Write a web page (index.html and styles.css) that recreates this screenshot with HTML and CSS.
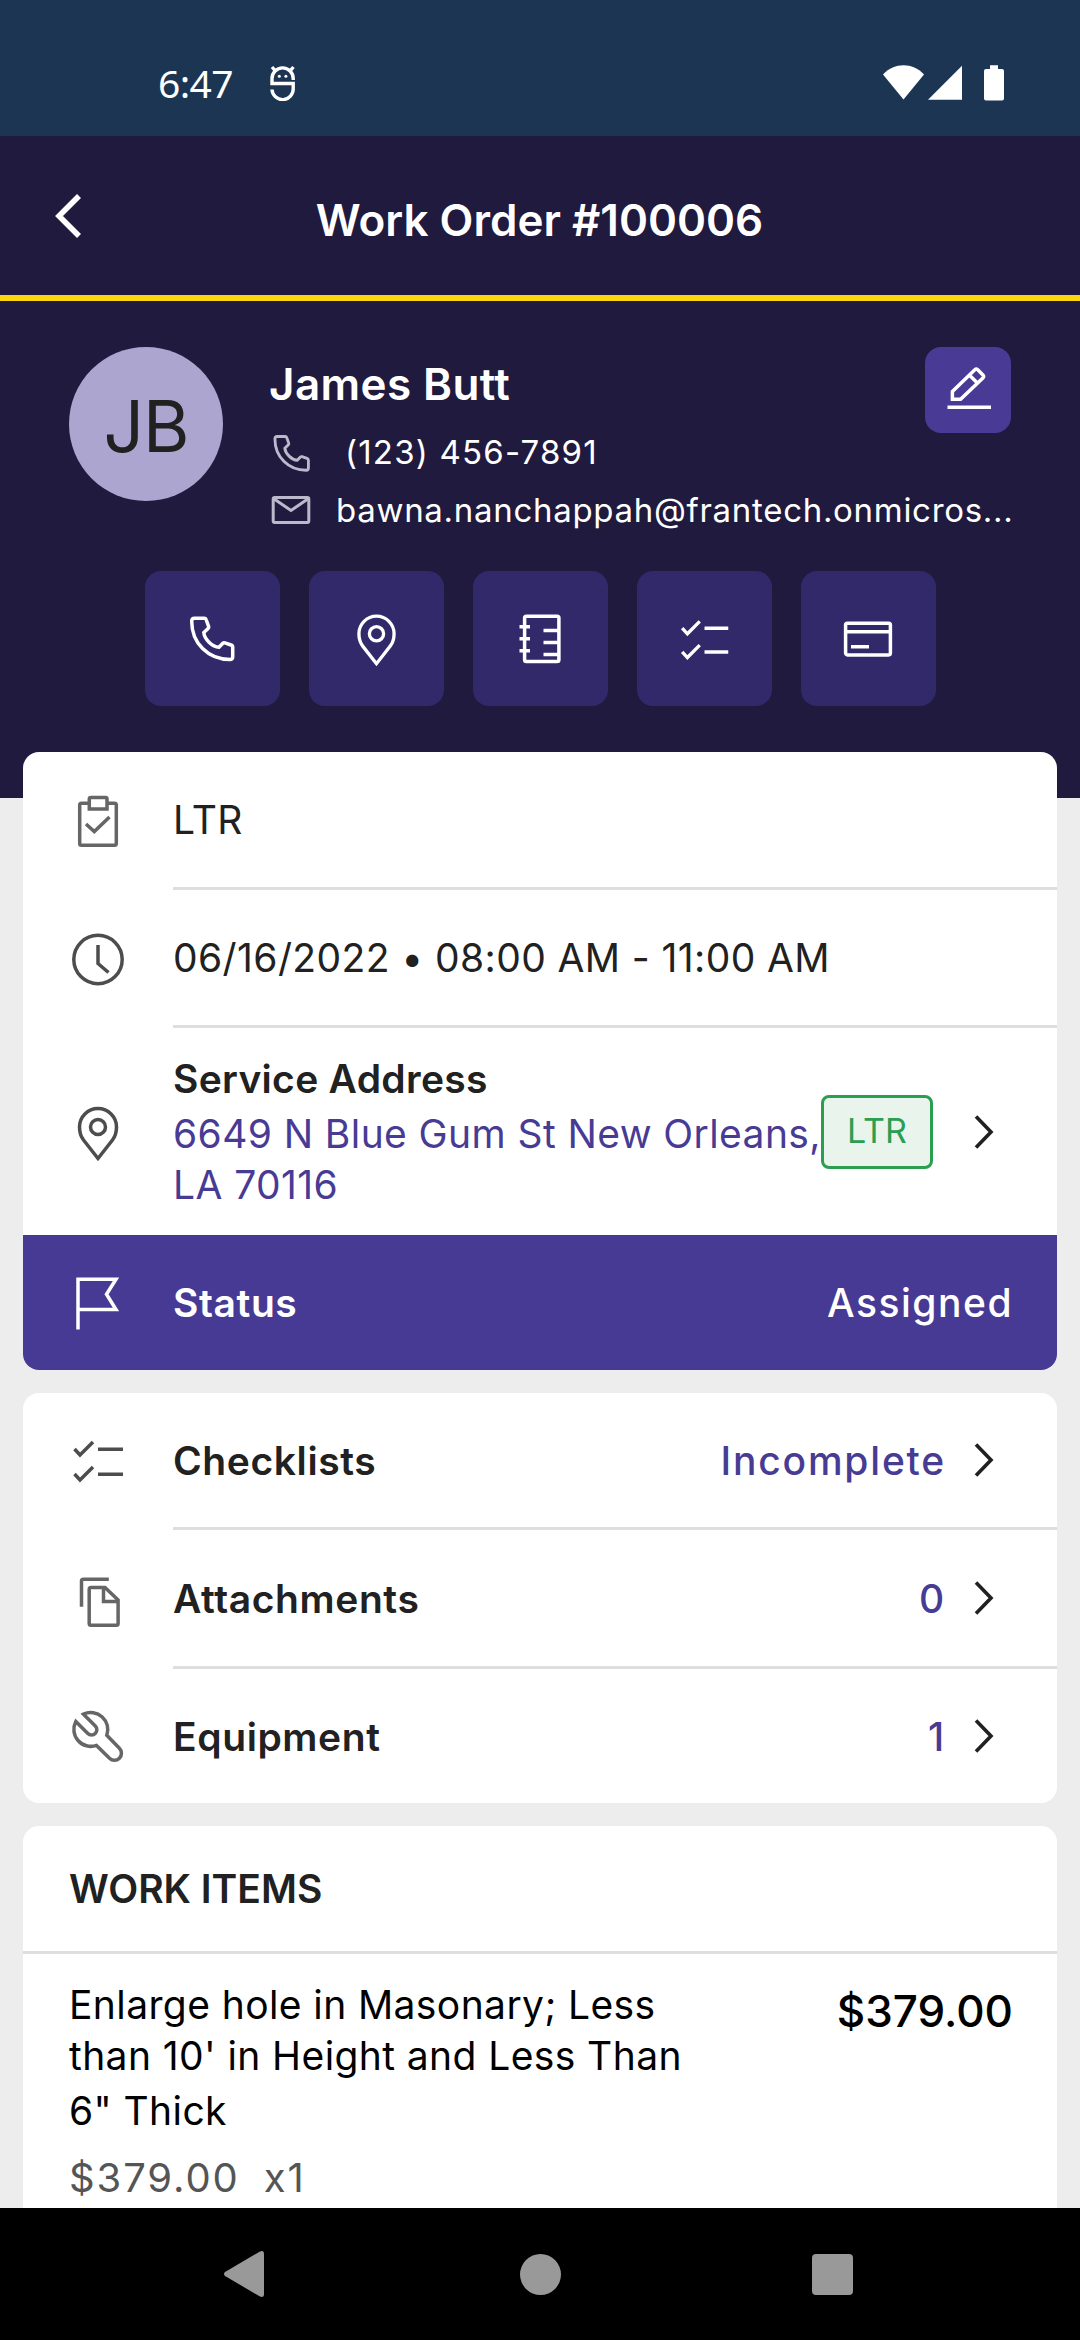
FILE: index.html
```
<!DOCTYPE html>
<html lang="en">
<head>
    <meta charset="UTF-8">
    <meta name="viewport" content="width=device-width, initial-scale=1.0">
    <title>Work Order #100006</title>
    <link rel="stylesheet" href="styles.css">
</head>
<body>
    <!-- shared icons -->
    <svg class="defs">
        <symbol id="phone" viewBox="0 0 60 60">
            <path d="M12.5 9.2H22.2c1 0 1.6.4 1.9 1.3l2.5 6.8c.3.9.1 1.5-.5 2.1L21.8 23.6C22.5 30 30 38 37 38.2l3.6-3.7c.7-.7 1.4-.9 2.3-.6L49 36c1.2.4 1.7 1 1.7 2.2v9.6c0 1.7-.9 2.7-2.7 2.7C26 50.5 9.7 34 9.7 12.2c0-1.9.9-3 2.8-3z"/>
        </symbol>
        <symbol id="pin" viewBox="0 0 60 60">
            <path d="M30 56.5L15.5 38C12.5 34 11.5 29.5 11.5 25a18.5 18.5 0 0 1 37 0c0 4.5-1 9-4 13z"/>
            <circle cx="30" cy="25" r="7.5"/>
        </symbol>
        <symbol id="checks" viewBox="0 0 60 60">
            <path d="M6.5 19l5.500 6L25 12M30 19.2h25M6.5 44l5.500 6L25 37M30 44.2h25"/>
        </symbol>
        <symbol id="next" viewBox="0 0 24 40">
            <path d="M4 4.5L19 20 4 35.5"/>
        </symbol>
    </svg>

    <div class="screen">
        <div class="statusbar">
            <span class="time">6:47</span>
            <svg class="critter" viewBox="0 0 26 36">
                <path d="M23.2 15v-1.5a10.6 10.6 0 0 0-21.2 0v5h21.2v5a10.6 10.6 0 0 1-21.2 1M2 2l3.5 4M23.5 2L20 6"/>
                <circle cx="9.3" cy="11.3" r="1.5"/>
                <circle cx="15.9" cy="11.3" r="1.5"/>
            </svg>
            <svg class="signals" viewBox="0 0 121 36">
                <path d="M0 9.5C6 3 13 .3 20.5 .3S35 3 41 9.5L20.5 34.5z"/>
                <path d="M45 34.7L79 .8v33.9z"/>
                <path d="M107 .3h8v3.7h4q2 0 2 2v27.5q0 2-2 2h-16q-2 0-2-2V6q0-2 2-2h4z"/>
            </svg>
        </div>

        <header class="topbar">
            <svg class="back" viewBox="0 0 30 48"><path d="M26 4L6 24l20 20"/></svg>
            <h1>Work Order #100006</h1>
        </header>

        <main>
            <section class="hero">
                <div class="customer">
                    <div class="avatar">JB</div>
                    <div class="details">
                        <div class="name-row">
                            <h2>James Butt</h2>
                            <div class="edit">
                                <svg class="icon" viewBox="0 0 60 60">
                                    <path d="M14.4 39.2v-7.7L36.8 9.8q1.5-1.3 3 0L44.9 15q1.4 1.5 0 3L22.6 39.2zM31.5 15.2l7.4 7.4M9.5 47.2H53"/>
                                </svg>
                            </div>
                        </div>
                        <div class="contact">
                            <svg class="icon small-phone"><use href="#phone"/></svg>
                            <span class="tel">(123) 456-7891</span>
                        </div>
                        <div class="contact">
                            <svg class="icon mail" viewBox="0 0 40 30"><rect x="2.2" y="2.5" width="35.6" height="25" rx="1.5"/><path d="M2.5 3.5L20 15.500 37.5 3.5"/></svg>
                            <span class="email">bawna.nanchappah@frantech.onmicros...</span>
                        </div>
                    </div>
                </div>

                <div class="actions">
                    <div class="action"><svg class="icon"><use href="#phone"/></svg></div>
                    <div class="action"><svg class="icon action-pin"><use href="#pin"/></svg></div>
                    <div class="action">
                        <svg class="icon" viewBox="0 0 60 60">
                            <rect x="14.6" y="7.3" width="34.3" height="45.2" rx="1.8"/>
                            <path d="M9.5 17.8H20M9.5 29.8H20M9.5 41.8H20M33.5 21.5H49M33.5 33.5H49M33.5 45.5H49"/>
                        </svg>
                    </div>
                    <div class="action"><svg class="icon action-checks"><use href="#checks"/></svg></div>
                    <div class="action">
                        <svg class="icon" viewBox="0 0 60 60">
                            <rect x="7.6" y="14.2" width="44.8" height="31.7" rx="1.8"/>
                            <path d="M7.6 22.8h44.8M13 37.8h18"/>
                        </svg>
                    </div>
                </div>
            </section>

            <div class="cards">
                <section class="card">
                    <div class="row">
                        <svg class="icon light" viewBox="0 0 60 60">
                            <path d="M20 13.2H13.5q-1.8 0-1.8 1.8v38.5q0 1.8 1.8 1.8h33q1.8 0 1.8-1.8V15q0-1.8-1.8-1.8H40"/>
                            <path d="M23 7.5h14.5q1.5 0 1.5 1.5v10H21.3V9q0-1.5 1.7-1.5zM18 34l8.3 7.5L41.5 27"/>
                        </svg>
                        <span class="text">LTR</span>
                    </div>
                    <div class="divider inset"></div>
                    <div class="row">
                        <svg class="icon" viewBox="0 0 60 60">
                            <circle cx="30" cy="31.5" r="24.2"/>
                            <path d="M30 17v18.5l10.5 9"/>
                        </svg>
                        <span class="text">06/16/2022 • 08:00 AM - 11:00 AM</span>
                    </div>
                    <div class="divider inset"></div>
                    <div class="row address-row">
                        <svg class="icon"><use href="#pin"/></svg>
                        <div class="text">
                            <div class="label">Service Address</div>
                            <div class="address">6649 N Blue Gum St New Orleans,<br>LA 70116</div>
                        </div>
                        <span class="badge">LTR</span>
                        <svg class="next"><use href="#next"/></svg>
                    </div>
                    <div class="row status">
                        <svg class="icon" viewBox="0 0 60 60"><path d="M10 56.5V6.3H48L38.5 21.3 48 36.5H10"/></svg>
                        <span class="text label">Status</span>
                        <span class="value">Assigned</span>
                    </div>
                </section>

                <section class="card links">
                    <div class="row">
                        <svg class="icon"><use href="#checks"/></svg>
                        <span class="text label">Checklists</span>
                        <span class="value">Incomplete</span>
                        <svg class="next"><use href="#next"/></svg>
                    </div>
                    <div class="divider inset"></div>
                    <div class="row middle">
                        <svg class="icon light" viewBox="0 0 60 60">
                            <path d="M13.5 38.7V13q0-1.8 1.8-1.8h25.5"/>
                            <path d="M37 19.6H23q-1.8 0-1.8 1.8v34q0 1.8 1.8 1.8h25.3q1.8 0 1.8-1.8V32zM35.5 20v13.5H50"/>
                        </svg>
                        <span class="text label">Attachments</span>
                        <span class="value">0</span>
                        <svg class="next"><use href="#next"/></svg>
                    </div>
                    <div class="divider inset"></div>
                    <div class="row">
                        <svg class="icon light" viewBox="0 0 60 60">
                            <path d="M7.8 15.5A17 17 0 0 0 28.5 39.4L41.5 52.2a7 7 0 0 0 9.9-9.9L38.8 29.3A17 17 0 0 0 15.5 8.2L27.3 20a5.3 5.3 0 0 1-7.5 7.5z"/>
                        </svg>
                        <span class="text label">Equipment</span>
                        <span class="value">1</span>
                        <svg class="next"><use href="#next"/></svg>
                    </div>
                </section>

                <section class="card">
                    <h3>WORK ITEMS</h3>
                    <div class="divider"></div>
                    <div class="item">
                        <div class="item-info">
                            <p>Enlarge hole in Masonary; Less<br>than 10' in Height and Less Than</p>
                            <p class="last-line">6" Thick</p>
                            <p class="qty"><span>$379.00</span><span>x1</span></p>
                        </div>
                        <div class="price">$379.00</div>
                    </div>
                </section>
            </div>
        </main>

        <nav class="navbar">
            <svg viewBox="0 0 40 46"><path d="M1 21Q-1 23 1 25L36 45.500Q40 47 40 43V3Q40 -1 36 .5z"/></svg>
            <div class="home"></div>
            <div class="recent"></div>
        </nav>
    </div>
</body>
</html>
```
FILE: styles.css
```
* {
    box-sizing: border-box;
    margin: 0;
    padding: 0;
}
body {
    font-family: Inter, "Liberation Sans", sans-serif;
    font-size: 39px;
    letter-spacing: 0.4px;
    color: #212121;
    background-color: #ededed;
}
h1, h2, h3 {
    font-weight: 600;
    letter-spacing: 0;
}
svg {
    display: block;
    flex-shrink: 0;
}
.defs {
    display: none;
}
.screen {
    display: flex;
    flex-direction: column;
    width: 1080px;
    height: 2340px;
    overflow: hidden;
}

/* status bar */
.statusbar {
    display: flex;
    align-items: center;
    height: 136px;
    padding: 30px 76px 0 158px;
    background-color: #1b3553;
    color: white;
}
.time {
    width: 112px;
    padding-bottom: 2px;
    font-family: "Noto Sans", sans-serif;
    font-size: 39px;
    letter-spacing: -0.6px;
}
.critter {
    width: 26px;
    height: 36px;
    fill: none;
    stroke: white;
    stroke-width: 3.4;
}
.critter circle {
    fill: white;
    stroke: none;
}
.signals {
    width: 121px;
    height: 36px;
    margin-left: auto;
    fill: white;
}

/* header */
.topbar {
    display: flex;
    align-items: center;
    height: 165px;
    padding: 0 53px;
    border-bottom: 6px solid #fdd50f;
    background-color: #1f1a3e;
    color: white;
}
.back {
    width: 30px;
    height: 48px;
    fill: none;
    stroke: white;
    stroke-width: 5.6;
}
.topbar h1 {
    flex: 1;
    padding: 9px 31px 0 0;
    font-size: 44px;
    text-align: center;
}

/* customer */
main {
    flex: 1;
    min-height: 0;
    overflow: hidden;
}
.hero {
    height: 497px;
    padding: 46px 69px 0;
    background-color: #1f1a3e;
    color: white;
}
.customer {
    display: flex;
    gap: 46px;
}
.avatar {
    flex-shrink: 0;
    width: 154px;
    height: 154px;
    padding-top: 4px;
    border-radius: 50%;
    background-color: #aba5cf;
    color: #212121;
    font-size: 71px;
    line-height: 150px;
    letter-spacing: -1px;
    text-align: center;
}
.details {
    flex: 1;
    min-width: 0;
}
.name-row {
    display: flex;
    justify-content: space-between;
    align-items: flex-start;
    height: 76px;
}
.name-row h2 {
    font-size: 44px;
    line-height: 74px;
    letter-spacing: 0.4px;
}
.edit {
    display: flex;
    align-items: center;
    justify-content: center;
    width: 86px;
    height: 86px;
    border-radius: 16px;
    background-color: #493b95;
}
.contact {
    display: flex;
    align-items: center;
    height: 58px;
    font-size: 33px;
    white-space: nowrap;
}
.icon {
    width: 60px;
    height: 60px;
    fill: none;
    stroke: currentColor;
    stroke-width: 3.5;
}
.contact .icon {
    color: #bcb9cd;
}
.small-phone {
    width: 49px;
    height: 49px;
    margin: 2px 29px 0 -2px;
}
.mail {
    width: 40px;
    height: 30px;
    margin: 0 25px 0 2px;
    stroke-width: 3;
}
.tel {
    letter-spacing: 1.2px;
}
.email {
    letter-spacing: 0.7px;
}
.actions {
    display: flex;
    justify-content: center;
    gap: 29px;
    margin-top: 32px;
}
.action {
    display: flex;
    align-items: center;
    justify-content: center;
    width: 135px;
    height: 135px;
    border-radius: 16px;
    background-color: #32296b;
}
.action-pin, .action-checks {
    width: 57px;
    height: 57px;
}

/* cards */
.cards {
    display: flex;
    flex-direction: column;
    gap: 23px;
    margin: -46px 23px 0;
}
.card {
    position: relative;
    border-radius: 16px;
    background-color: white;
    overflow: hidden;
}
.row {
    display: flex;
    align-items: center;
    height: 135px;
    padding: 0 61px 0 45px;
}
.row .icon {
    margin-right: 45px;
    color: #4d4d4d;
}
.row .icon.light {
    color: #666;
}
.row .text {
    flex: 1;
    white-space: nowrap;
}
.row .label {
    font-weight: 600;
    letter-spacing: 0.6px;
}
.divider {
    height: 3px;
    background-color: #dedede;
}
.inset {
    margin-left: 150px;
}
.address-row {
    height: 207px;
}
.address-row .label {
    line-height: 59px;
    letter-spacing: 0.3px;
}
.address-row .text {
    padding-bottom: 5px;
}
.address {
    color: #483b94;
    line-height: 51px;
}
.badge {
    width: 112px;
    height: 74px;
    margin-right: 39px;
    border: 3px solid #2b9e50;
    border-radius: 8px;
    background-color: #e8f4ec;
    color: #2b9e50;
    font-size: 34px;
    line-height: 65px;
    letter-spacing: 0;
    text-align: center;
}
.next {
    width: 24px;
    height: 40px;
    fill: none;
    stroke: #212121;
    stroke-width: 3.6;
}
.value {
    font-weight: 500;
    letter-spacing: 1.8px;
}
.status {
    padding-right: 44px;
    background-color: #473a94;
    color: white;
}
.row.status .icon {
    color: white;
}
.status .value {
    letter-spacing: 1.5px;
}
.links .row {
    height: 134px;
}
.links .row.middle {
    height: 136px;
}
.links .value {
    margin-right: 26px;
    color: #483b94;
}

/* work items */
.card h3 {
    padding-left: 46px;
    font-size: 39px;
    line-height: 125px;
}
.item {
    display: flex;
    justify-content: space-between;
    padding: 25px 44px 40px 46px;
    color: black;
}
.item p {
    line-height: 51px;
    white-space: nowrap;
}
.item .last-line {
    padding-top: 4px;
}
.item .qty {
    display: flex;
    gap: 24px;
    padding-top: 16px;
    color: #555;
    font-size: 40px;
    letter-spacing: 1.9px;
}
.price {
    font-size: 44px;
    font-weight: 500;
    line-height: 65px;
    letter-spacing: 0;
}

/* android navigation */
.navbar {
    display: flex;
    align-items: center;
    justify-content: space-between;
    height: 132px;
    padding: 0 227px 0 224px;
    background-color: black;
}
.navbar svg {
    width: 40px;
    height: 46px;
    fill: #999;
}
.home {
    width: 41px;
    height: 41px;
    margin-left: 4px;
    border-radius: 50%;
    background-color: #999;
}
.recent {
    width: 41px;
    height: 41px;
    border-radius: 4px;
    background-color: #999;
}
```
